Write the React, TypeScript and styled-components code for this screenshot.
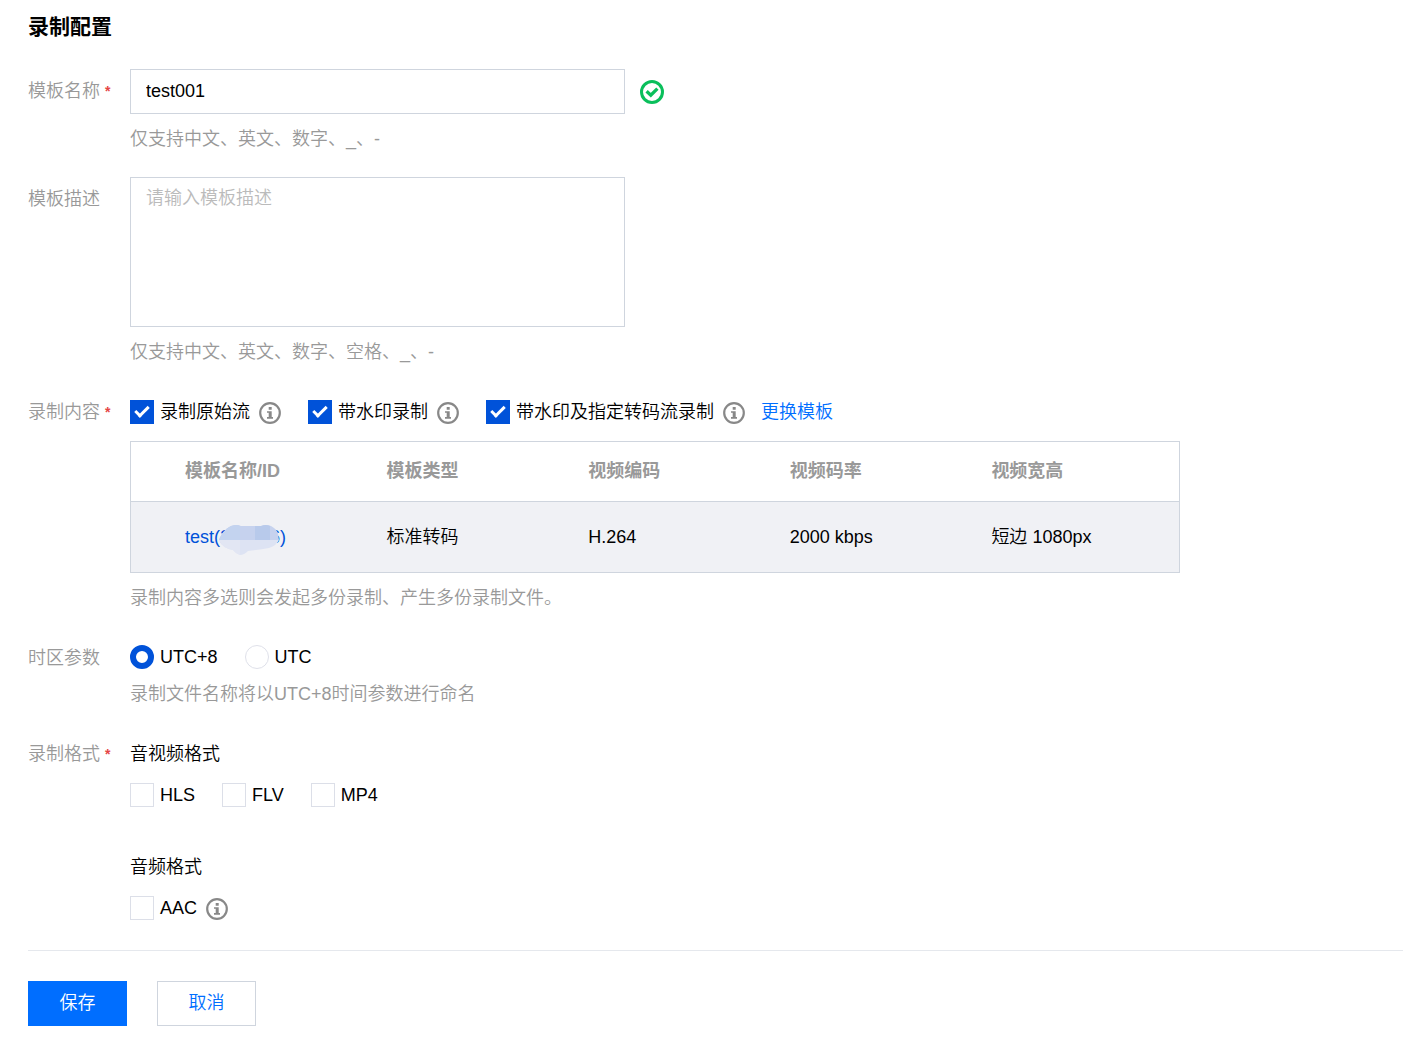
import React, { useId, useState } from "react";
import styled, { createGlobalStyle, css } from "styled-components";

const GlobalStyle = createGlobalStyle`
  *, *::before, *::after { box-sizing: border-box; }
  body {
    margin: 0;
    background: #fff;
    color: #000;
    font: 350 18px/27px "Liberation Sans", "Noto Sans CJK SC", sans-serif;
  }
  button, input, textarea { font: inherit; }
`;

const Page = styled.main`
  padding: 12px 0 17px 28px;
`;

const Title = styled.h1`
  margin: 0 0 27px;
  font-size: 21px;
  line-height: 30px;
  font-weight: 700;
`;

const Form = styled.form`
  display: flex;
  flex-direction: column;
`;

const Fields = styled.div`
  display: flex;
  flex-direction: column;
  gap: 24px;
  padding-bottom: 28px;
  border-bottom: 1px solid #e5e8ed;
`;

const Row = styled.div`
  display: grid;
  grid-template-columns: 102px minmax(0, 1fr);
`;

const labelStyle = css`
  display: flex;
  align-items: center;
  align-self: start;
  gap: 5px;
  padding-top: 9px;
  color: #999;
`;

const FieldLabel = styled.label`
  ${labelStyle}
`;

const GroupLabel = styled.span`
  ${labelStyle}
`;

const Asterisk = styled.span`
  color: #e54545;
  font-size: 14px;
  font-weight: 700;
  line-height: 21px;
`;

const Content = styled.div<{ $text?: boolean }>`
  padding-top: ${(p) => (p.$text ? 9 : 0)}px;
`;

const InputLine = styled.div`
  display: flex;
  align-items: center;
  gap: 15px;
`;

const boxStyle = css`
  width: 100%;
  max-width: 495px;
  border: 1px solid #cfd5de;
  border-radius: 0;
  background: #fff;
  color: #000;
  outline: none;
  &:focus { border-color: #006eff; }
`;

const TextInput = styled.input`
  ${boxStyle}
  height: 45px;
  padding: 0 15px;
`;

const TextArea = styled.textarea`
  ${boxStyle}
  display: block;
  height: 150px;
  padding: 7px 15px;
  resize: none;
  &::placeholder { color: #bbb; opacity: 1; }
`;

const Help = styled.p<{ $tight?: boolean }>`
  margin: ${(p) => (p.$tight ? 9 : 12)}px 0 0;
  color: #999;
`;

const Options = styled.div<{ $below?: boolean }>`
  display: flex;
  flex-wrap: wrap;
  align-items: center;
  gap: 0 27px;
  margin-top: ${(p) => (p.$below ? 14 : 0)}px;
`;

const Option = styled.div`
  display: flex;
  align-items: flex-start;
  height: 27px;
  gap: 9px;
`;

const OptionLabel = styled.label<{ $round?: boolean }>`
  display: flex;
  align-items: center;
  height: ${(p) => (p.$round ? 24 : 26)}px;
  gap: 6px;
  cursor: pointer;
`;

const Check = styled.input`
  appearance: none;
  display: grid;
  place-content: center;
  width: 24px;
  height: 24px;
  margin: 0;
  border: 1px solid #dcdfe8;
  background: #fff;
  cursor: pointer;
  &:checked {
    border-color: #0052d9;
    background: #0052d9;
  }
  &:checked::before {
    content: "";
    width: 14px;
    height: 8px;
    margin-bottom: 4px;
    border: solid #fff;
    border-width: 0 0 3px 3px;
    transform: rotate(-45deg);
  }
`;

const Radio = styled.input`
  appearance: none;
  width: 24px;
  height: 24px;
  margin: 0;
  border: 1px solid #dfe1ea;
  border-radius: 50%;
  background: #fff;
  cursor: pointer;
  &:checked { border: 6px solid #0052d9; }
`;

const Link = styled.a`
  color: #006eff;
  text-decoration: none;
`;

const LinkedOption = styled.div`
  display: flex;
  align-items: center;
  gap: 16px;
`;

const Table = styled.table`
  width: 100%;
  max-width: 1050px;
  margin-top: 15px;
  border: 1px solid #cfd5de;
  border-spacing: 0;
  table-layout: fixed;
`;

const SpacerCol = styled.col`
  width: 40px;
`;

const Th = styled.th`
  height: 60px;
  padding: 0 14px;
  border-bottom: 1px solid #cfd5de;
  color: #999;
  font-weight: 700;
  text-align: left;
`;

const Td = styled.td`
  height: 70px;
  padding: 0 14px;
  background: #f0f1f5;
`;

const IdLink = styled.a`
  display: inline-flex;
  color: #0052d9;
  text-decoration: none;
`;

const MaskedId = styled.span`
  position: relative;
  display: flex;
  justify-content: space-between;
  width: 60px;
`;

const MaskShape = styled.svg`
  position: absolute;
  top: 1px;
  left: -1px;
`;

const SubHeading = styled.h2<{ $next?: boolean }>`
  margin: ${(p) => (p.$next ? 45 : 0)}px 0 0;
  font-size: 18px;
  line-height: 27px;
  font-weight: inherit;
`;

const Actions = styled.div`
  display: flex;
  gap: 30px;
  padding-top: 30px;
`;

const Button = styled.button<{ $primary?: boolean }>`
  min-width: 99px;
  height: 45px;
  padding: 0 30px;
  border: 1px solid ${(p) => (p.$primary ? "#006eff" : "#cfd5de")};
  background: ${(p) => (p.$primary ? "#006eff" : "#fff")};
  color: ${(p) => (p.$primary ? "#fff" : "#006eff")};
  cursor: pointer;
`;

const Icon = styled.svg`
  display: block;
  flex: none;
`;

const InfoMark = styled(Icon)`
  margin-top: 3px;
`;

const SuccessIcon = () => (
  <Icon width="24" height="24" viewBox="0 0 24 24" fill="none" stroke="#0abf5b" strokeWidth="3" role="img" aria-label="校验通过">
    <circle cx="12" cy="12" r="10.5" />
    <path d="M6.6 11.2 10.8 15.2 17.4 8.6" strokeWidth="3.3" />
  </Icon>
);

const InfoIcon = () => (
  <InfoMark width="22" height="22" viewBox="0 0 22 22" aria-hidden="true">
    <circle cx="11" cy="11" r="9.8" fill="none" stroke="#888" strokeWidth="2.2" />
    <path d="M9.7 5h3v2.8h-3zM8 9.2h4.7V15H14v1.7H8V15h1.7v-4.2H8z" fill="#888" />
  </InfoMark>
);

const IdMask = () => (
  <MaskShape width="60" height="31" viewBox="0 0 60 31" aria-hidden="true">
    <path d="M0 15C2 9 6 4 12 1Q18 -1 22 1H42Q47 -1 52 1Q58 4 59 9L60 15Z" fill="#c6d2ee" />
    <path d="M12 1Q18 -1 21 1V15H0C2 9 6 4 12 1Z" fill="#c3d3ef" />
    <path d="M36 1H42Q47 -1 51 1V15H36Z" fill="#b8caeb" />
    <path d="M0 15H60Q58 20 50 23Q40 25 29 26Q25 30 21 30Q17 29 14 25Q3 23 0 15Z" fill="#dde3f3" />
    <path d="M0 15H21V30Q17 29 14 25Q3 23 0 15Z" fill="#e2e6f3" />
  </MaskShape>
);

type CheckOptionProps = { label: string; checked?: boolean; info?: boolean };

function CheckOption({ label, checked, info }: CheckOptionProps) {
  const id = useId();
  return (
    <Option>
      <OptionLabel htmlFor={id}>
        <Check id={id} type="checkbox" defaultChecked={checked} />
        {label}
      </OptionLabel>
      {info && <InfoIcon />}
    </Option>
  );
}

const columns = ["模板名称/ID", "模板类型", "视频编码", "视频码率", "视频宽高"];
const zones = ["UTC+8", "UTC"];

export default function App() {
  const [name, setName] = useState("test001");
  const [zone, setZone] = useState("UTC+8");

  return (
    <Page>
      <GlobalStyle />
      <Title>录制配置</Title>
      <Form onSubmit={(e) => e.preventDefault()}>
        <Fields>
          <Row>
            <FieldLabel htmlFor="name">模板名称<Asterisk>*</Asterisk></FieldLabel>
            <Content>
              <InputLine>
                <TextInput id="name" type="text" value={name} onChange={(e) => setName(e.target.value)} />
                <SuccessIcon />
              </InputLine>
              <Help>仅支持中文、英文、数字、_、-</Help>
            </Content>
          </Row>

          <Row>
            <FieldLabel htmlFor="description">模板描述</FieldLabel>
            <Content>
              <TextArea id="description" placeholder="请输入模板描述" />
              <Help>仅支持中文、英文、数字、空格、_、-</Help>
            </Content>
          </Row>

          <Row role="group" aria-labelledby="content-label">
            <GroupLabel id="content-label">录制内容<Asterisk>*</Asterisk></GroupLabel>
            <Content $text>
              <Options>
                <CheckOption label="录制原始流" checked info />
                <CheckOption label="带水印录制" checked info />
                <LinkedOption>
                  <CheckOption label="带水印及指定转码流录制" checked info />
                  <Link href="#change">更换模板</Link>
                </LinkedOption>
              </Options>
              <Table>
                <colgroup>
                  <SpacerCol />
                  {columns.map((c) => <col key={c} />)}
                </colgroup>
                <thead>
                  <tr>
                    <Th as="td" />
                    {columns.map((c) => <Th key={c} scope="col">{c}</Th>)}
                  </tr>
                </thead>
                <tbody>
                  <tr>
                    <Td />
                    <Td>
                      <IdLink href="#template">
                        test(<MaskedId><span>2</span><span>6</span><IdMask /></MaskedId>)
                      </IdLink>
                    </Td>
                    <Td>标准转码</Td>
                    <Td>H.264</Td>
                    <Td>2000 kbps</Td>
                    <Td>短边 1080px</Td>
                  </tr>
                </tbody>
              </Table>
              <Help>录制内容多选则会发起多份录制、产生多份录制文件。</Help>
            </Content>
          </Row>

          <Row role="radiogroup" aria-labelledby="zone-label">
            <GroupLabel id="zone-label">时区参数</GroupLabel>
            <Content $text>
              <Options>
                {zones.map((z) => (
                  <Option key={z}>
                    <OptionLabel $round htmlFor={`zone-${z}`}>
                      <Radio id={`zone-${z}`} type="radio" name="zone" checked={zone === z} onChange={() => setZone(z)} />
                      {z}
                    </OptionLabel>
                  </Option>
                ))}
              </Options>
              <Help $tight>录制文件名称将以{zone}时间参数进行命名</Help>
            </Content>
          </Row>

          <Row role="group" aria-labelledby="format-label">
            <GroupLabel id="format-label">录制格式<Asterisk>*</Asterisk></GroupLabel>
            <Content $text>
              <SubHeading>音视频格式</SubHeading>
              <Options $below>
                <CheckOption label="HLS" />
                <CheckOption label="FLV" />
                <CheckOption label="MP4" />
              </Options>
              <SubHeading $next>音频格式</SubHeading>
              <Options $below>
                <CheckOption label="AAC" info />
              </Options>
            </Content>
          </Row>
        </Fields>
        <Actions>
          <Button $primary type="submit">保存</Button>
          <Button type="button">取消</Button>
        </Actions>
      </Form>
    </Page>
  );
}
